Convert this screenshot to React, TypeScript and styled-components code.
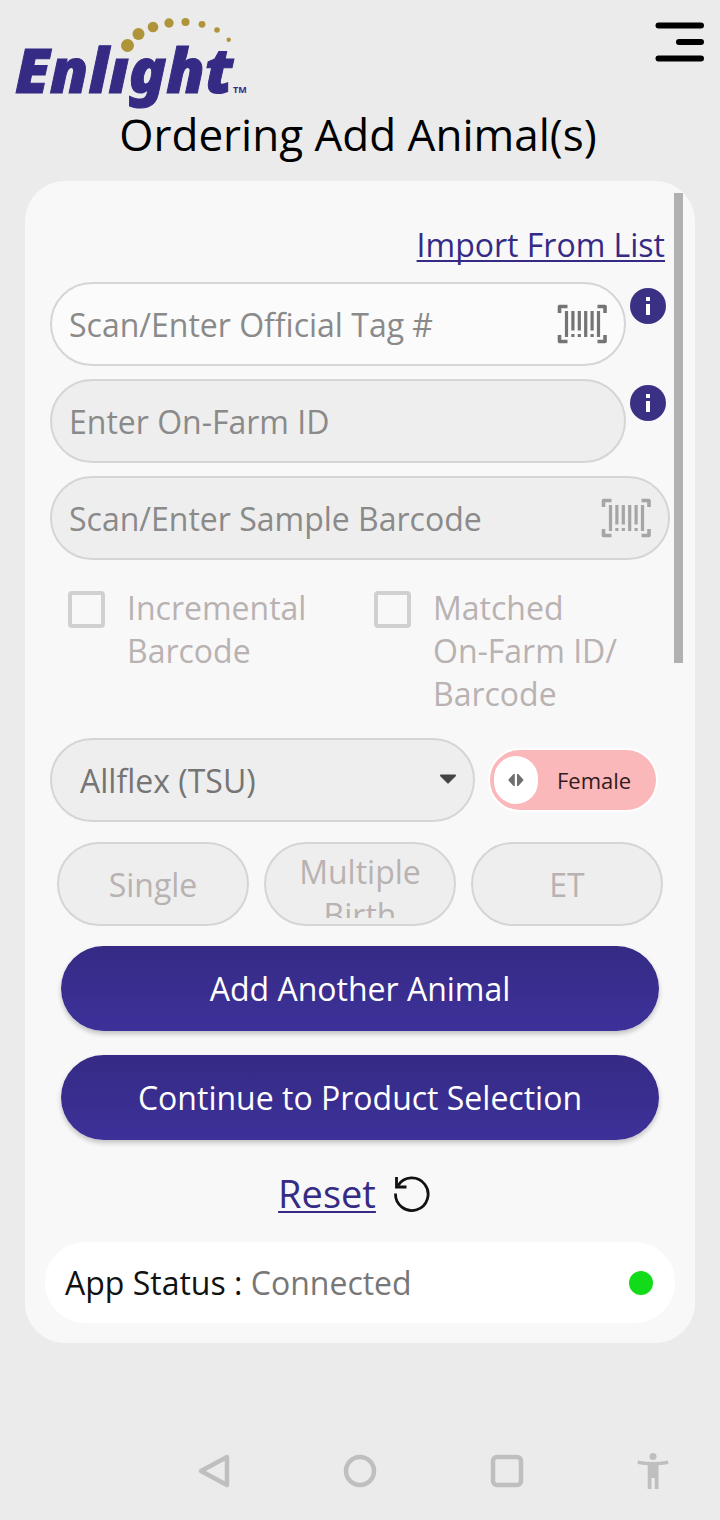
import React from "react";
import styled, { createGlobalStyle } from "styled-components";

const color = {
  page: "#ebebeb",
  card: "#f8f8f8",
  field: "#eeeeee",
  border: "#d5d5d5",
  brand: "#352b85",
  gold: "#b0943a",
  hint: "#8a8a8a",
  muted: "#b9b2b2",
  nav: "#bfbfbf",
};

const GlobalStyle = createGlobalStyle`
  * { box-sizing: border-box; }
  body {
    margin: 0;
    background: ${color.page};
    font-family: "Open Sans", "Noto Sans", sans-serif;
    font-size: 32px;
    line-height: 43px;
    color: #000;
  }
  button, input, select { font: inherit; margin: 0; }
  svg { display: block; flex: none; }
`;

const Page = styled.div`
  display: flex;
  flex-direction: column;
  min-height: 100vh;
`;

const Header = styled.header`
  display: flex;
  justify-content: space-between;
  align-items: flex-start;
  padding: 12px 14px 0 12px;
`;

const LogoMark = styled.svg`
  overflow: visible;
`;

const MenuButton = styled.button`
  padding: 8px 0;
  border: 0;
  background: none;
`;

const Title = styled.h1`
  margin: 0 4px 0 0;
  font-size: 44px;
  line-height: 60px;
  font-weight: 400;
  text-align: center;
`;

const Card = styled.main`
  position: relative;
  margin: 17px 25px 0;
  padding: 42px 20px 20px;
  border-radius: 40px;
  background: ${color.card};
`;

const ScrollThumb = styled.div`
  position: absolute;
  top: 12px;
  right: 12px;
  width: 9px;
  height: 470px;
  background: #b1b1b1;
`;

const Form = styled.form`
  display: flex;
  flex-direction: column;
  padding: 0 5px;
`;

const TextLink = styled.a<{ $large?: boolean }>`
  color: ${color.brand};
  font-size: ${(p) => (p.$large ? 38 : 32)}px;
  text-decoration: underline;
  text-decoration-thickness: 2px;
  text-decoration-skip-ink: none;
  text-underline-offset: 3px;
`;

const ImportRow = styled.div`
  display: flex;
  justify-content: flex-end;
  padding-right: 5px;
  margin-bottom: 16px;
`;

const Fields = styled.div`
  display: flex;
  flex-direction: column;
  gap: 13px;
`;

const FieldRow = styled.div`
  display: flex;
  align-items: flex-start;
  gap: 4px;
`;

const Field = styled.div<{ $active?: boolean }>`
  display: flex;
  flex: 1;
  align-items: center;
  min-width: 0;
  height: 84px;
  padding: 0 17px;
  border: 2px solid ${color.border};
  border-radius: 42px;
  background: ${(p) => (p.$active ? "#fbfbfb" : color.field)};
`;

const TextInput = styled.input`
  flex: 1;
  min-width: 0;
  padding: 0;
  border: 0;
  outline: 0;
  background: none;
  color: #333;
  &::placeholder { color: ${color.hint}; opacity: 1; }
`;

const IconButton = styled.button`
  padding: 0;
  border: 0;
  background: none;
`;

const InfoButton = styled(IconButton)`
  margin: 6px 4px 0 0;
`;

const Checks = styled.div`
  display: grid;
  grid-template-columns: 1fr 1fr;
  gap: 10px;
  padding: 26px 0 23px 18px;
`;

const CheckLabel = styled.label`
  display: flex;
  align-items: flex-start;
  gap: 22px;
  color: ${color.muted};
`;

const NoBreak = styled.span`
  white-space: nowrap;
`;

const CheckBox = styled.input`
  appearance: none;
  flex: none;
  width: 37px;
  height: 37px;
  margin-top: 5px;
  border: 4px solid #d0d0d0;
  border-radius: 4px;
`;

const ChoiceRow = styled.div`
  display: flex;
  align-items: center;
  gap: 13px;
  padding-right: 12px;
`;

const SelectWrap = styled.div`
  position: relative;
  flex: 1;
  svg {
    position: absolute;
    right: 18px;
    top: 36px;
    pointer-events: none;
  }
`;

const Select = styled.select`
  appearance: none;
  display: block;
  width: 100%;
  height: 84px;
  padding: 0 48px 0 28px;
  border: 2px solid ${color.border};
  border-radius: 42px;
  background: ${color.field};
  color: #757575;
`;

const Toggle = styled.label`
  display: flex;
  align-items: center;
  width: 170px;
  height: 64px;
  padding-left: 4px;
  border: 2px solid #fff;
  border-radius: 32px;
  background: #fab8ba;
  color: #331a1c;
  font-size: 22px;
`;

const ToggleInput = styled.input`
  appearance: none;
  position: absolute;
  width: 0;
  height: 0;
`;

const Knob = styled.span`
  display: flex;
  align-items: center;
  justify-content: center;
  width: 44px;
  height: 48px;
  margin-right: 19px;
  border-radius: 22px;
  background: #fff;
`;

const BirthRow = styled.div`
  display: grid;
  grid-template-columns: repeat(3, 1fr);
  gap: 15px;
  padding: 20px 7px;
`;

const BirthButton = styled.button`
  display: flex;
  justify-content: center;
  align-items: center;
  height: 84px;
  padding: 0 16px;
  border: 2px solid ${color.border};
  border-radius: 42px;
  background: ${color.field};
  color: ${color.muted};
`;

const BirthText = styled.span`
  max-height: 68px;
  overflow: hidden;
  line-height: 43px;
`;

const Actions = styled.div`
  display: flex;
  flex-direction: column;
  gap: 24px;
  padding: 0 11px;
`;

const PrimaryButton = styled.button`
  height: 85px;
  padding: 0;
  border: 0;
  border-radius: 43px;
  background: linear-gradient(#352b85, #3d3199);
  box-shadow: 0 3px 5px rgba(0, 0, 0, 0.22);
  color: #fff;
`;

const ResetRow = styled.div`
  display: flex;
  align-items: center;
  justify-content: center;
  gap: 17px;
  padding: 32px 11px 27px 0;
`;

const Status = styled.div`
  display: flex;
  align-items: center;
  justify-content: space-between;
  height: 81px;
  padding: 0 22px 0 20px;
  border-radius: 40px;
  background: #fff;
  color: #111;
`;

const StatusValue = styled.span`
  color: #777;
`;

const StatusDot = styled.span`
  width: 24px;
  height: 24px;
  border-radius: 50%;
  background: #12dc1a;
`;

const NavBar = styled.nav`
  display: flex;
  justify-content: space-between;
  margin-top: auto;
  padding: 0 47px 29px 194px;
`;

const dots = [
  [127.5, 45.5, 6.5], [138.5, 34, 6], [153, 27, 5.3], [169, 23, 4.7],
  [185.5, 22, 4], [202, 24.3, 3.4], [217, 30, 2.8], [228.7, 39.7, 2.2],
];

const Logo = () => (
  <LogoMark width="240" height="92" viewBox="12 12 240 92" role="img" aria-label="Enlight">
    <text x="15" y="93" fontFamily="Noto Sans" fontWeight="900" fontStyle="italic" fontSize="62" fill={color.brand} stroke={color.brand} strokeWidth="1">
      Enlıght
    </text>
    <text x="233" y="93" fontFamily="Open Sans" fontWeight="700" fontSize="9" fill={color.brand}>TM</text>
    {dots.map(([x, y, r]) => <circle key={x} cx={x} cy={y} r={r} fill={color.gold} />)}
  </LogoMark>
);

const BarcodeIcon = ({ stroke }: { stroke: string }) => (
  <svg width="50" height="40" viewBox="0 0 50 40" fill="none" stroke={stroke}>
    <path d="M2.500 9V2.500H10.500M40.500 2.500H48V9M48 31V37.500H40.500M10.500 37.500H2.500V31" strokeWidth="3.6" strokeLinejoin="round" />
    <path d="M9.500 7V33M41.500 7V33M28.700 7V33M15.900 7V26.500M22.300 7V26.500M35.100 7V26.500M15.900 30V33M22.300 30V33M35.100 30V33" strokeWidth="3.2" />
  </svg>
);

const InfoIcon = () => (
  <svg width="36" height="36" viewBox="0 0 36 36">
    <circle cx="18" cy="18" r="18" fill="#3a3184" />
    <path d="M16 9h4v4h-4zM16 16h4v11h-4z" fill="#fff" />
  </svg>
);

const Info = ({ about }: { about: string }) => (
  <InfoButton type="button" aria-label={`About ${about}`}>
    <InfoIcon />
  </InfoButton>
);

export default function App() {
  return (
    <>
      <GlobalStyle />
      <Page>
        <Header>
          <Logo />
          <MenuButton aria-label="Menu">
            <svg width="52" height="44" viewBox="0 0 52 44" stroke="#000" strokeWidth="6" strokeLinecap="round">
              <path d="M4.500 5.500H47M25 22H47M4.500 38.500H47" />
            </svg>
          </MenuButton>
        </Header>
        <Title>Ordering Add Animal(s)</Title>
        <Card>
          <ScrollThumb />
          <Form onSubmit={(e) => e.preventDefault()}>
            <ImportRow><TextLink href="#import">Import From List</TextLink></ImportRow>
            <Fields>
              <FieldRow>
                <Field $active>
                  <TextInput aria-label="Official tag number" placeholder="Scan/Enter Official Tag #" />
                  <IconButton type="button" aria-label="Scan tag"><BarcodeIcon stroke="#747474" /></IconButton>
                </Field>
                <Info about="official tag" />
              </FieldRow>
              <FieldRow>
                <Field>
                  <TextInput aria-label="On-farm ID" placeholder="Enter On-Farm ID" />
                </Field>
                <Info about="on-farm ID" />
              </FieldRow>
              <FieldRow>
                <Field>
                  <TextInput aria-label="Sample barcode" placeholder="Scan/Enter Sample Barcode" />
                  <IconButton type="button" aria-label="Scan barcode"><BarcodeIcon stroke="#a5a5a5" /></IconButton>
                </Field>
              </FieldRow>
            </Fields>
            <Checks>
              <CheckLabel><CheckBox type="checkbox" /><span>Incremental Barcode</span></CheckLabel>
              <CheckLabel><CheckBox type="checkbox" /><span>Matched <NoBreak>On-Farm ID/</NoBreak> Barcode</span></CheckLabel>
            </Checks>
            <ChoiceRow>
              <SelectWrap>
                <Select aria-label="Sample type"><option>Allflex (TSU)</option></Select>
                <svg width="18" height="10" viewBox="0 0 18 10"><path d="M2 1.500H16L9 8.500Z" fill="#444" stroke="#444" strokeWidth="2" strokeLinejoin="round" /></svg>
              </SelectWrap>
              <Toggle>
                <ToggleInput type="checkbox" role="switch" />
                <Knob>
                  <svg width="16" height="14" viewBox="0 0 16 14" fill="#707070"><path d="M6.800 1V13H5.500L.5 7.500V6.500L5.500 1ZM9 1V13H10.300L15.300 7.500V6.500L10.300 1Z" /></svg>
                </Knob>
                Female
              </Toggle>
            </ChoiceRow>
            <BirthRow>
              <BirthButton type="button"><BirthText>Single</BirthText></BirthButton>
              <BirthButton type="button"><BirthText>Multiple Birth</BirthText></BirthButton>
              <BirthButton type="button"><BirthText>ET</BirthText></BirthButton>
            </BirthRow>
            <Actions>
              <PrimaryButton type="button">Add Another Animal</PrimaryButton>
              <PrimaryButton type="submit">Continue to Product Selection</PrimaryButton>
            </Actions>
            <ResetRow>
              <TextLink $large href="#reset">Reset</TextLink>
              <svg width="38" height="38" viewBox="0 0 38 38" fill="none" stroke="#111" strokeWidth="2.8">
                <path d="M2.500 18.500A16.300 16.300 0 1 0 5 10.500" />
                <path d="M3.500 2V12H13.500" />
              </svg>
            </ResetRow>
          </Form>
          <Status>
            <span>App Status : <StatusValue>Connected</StatusValue></span>
            <StatusDot />
          </Status>
        </Card>
        <NavBar>
          <IconButton aria-label="Back">
            <svg width="40" height="40" viewBox="0 0 40 40" fill="none" stroke={color.nav} strokeWidth="4.500" strokeLinejoin="round"><path d="M33 6V34L7 20Z" /></svg>
          </IconButton>
          <IconButton aria-label="Home">
            <svg width="40" height="40" viewBox="0 0 40 40" fill="none" stroke={color.nav} strokeWidth="4.500"><circle cx="20" cy="20" r="14" /></svg>
          </IconButton>
          <IconButton aria-label="Recent apps">
            <svg width="40" height="40" viewBox="0 0 40 40" fill="none" stroke={color.nav} strokeWidth="4.500"><rect x="6" y="6" width="28" height="28" rx="4" /></svg>
          </IconButton>
          <IconButton aria-label="Accessibility">
            <svg width="40" height="40" viewBox="0 0 40 40" fill={color.nav}>
              <circle cx="20" cy="5.500" r="3.500" />
              <path d="M5 9.500Q20 12.500 35 9.500L35.500 13Q30 14 25.500 14.300V38H21.700V27H18.500V38H14.700V14.300Q10 14 4.500 13Z" />
            </svg>
          </IconButton>
        </NavBar>
      </Page>
    </>
  );
}
